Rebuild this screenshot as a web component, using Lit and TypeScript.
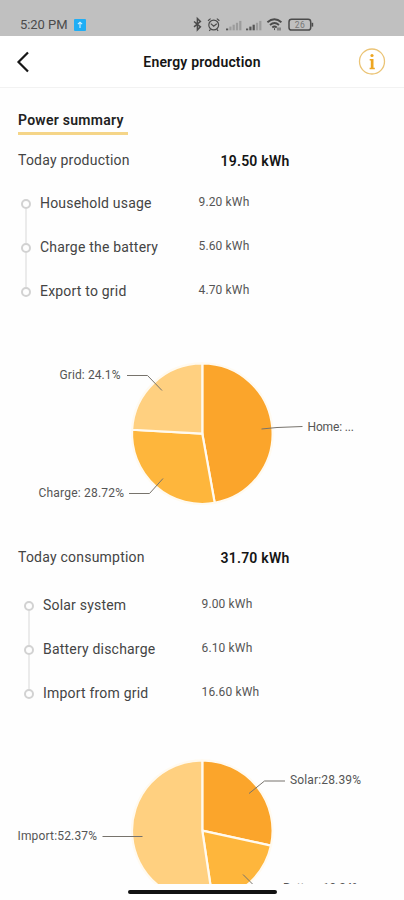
import { LitElement, html, svg, css } from "lit";
import { customElement, property } from "lit/decorators.js";

interface Row { label: string; value: string; }
interface Slice { share: number; color: string; }
interface Callout { text: string; x: number; y: number; width: number; line: string; }

const C = { deep: "#fba52b", mid: "#feb63c", light: "#ffd080" };

@customElement("status-bar")
class StatusBar extends LitElement {
  static styles = css`
    :host { display: flex; height: 36px; background: #c0c0c0; color: #4b4b4b; box-sizing: border-box; padding: 13px 0 0 20px; }
    .time { font-size: 13px; line-height: 24px; width: 54px; letter-spacing: -0.05px; white-space: nowrap; }
    .badge { width: 12px; height: 12px; margin-top: 6px; }
    .icons { margin-left: 105px; width: 124px; height: 20px; margin-top: 2px; }
    text { font-size: 8.5px; }
  `;
  render() {
    const bars = (x: number, on: number) => [0, 1, 2, 3, 4].map((i) => svg`
      <rect x=${x + i * 3.3} y=${13.5 - i * 1.9} width="2.200" height=${1.8 + i * 1.9} fill=${i < on ? "#555" : "#9c9c9c"}></rect>`);
    return html`
      <span class="time">5:20 PM</span>
      <svg class="badge" viewBox="0 0 12 12"><rect width="12" height="12" rx="1" fill="#20aef5"></rect>
        <path d="M6 9V3.4M3.9 5.2 6 3.2l2.1 2" fill="none" stroke="#d5f1ff" stroke-width="1.1"></path></svg>
      <svg class="icons" viewBox="191 15 124 20" fill="none" stroke="#4b4b4b" stroke-width="1.2">
        <path d="M194 21.5l6.400 5.400-3 3V18.500l3 3-6.400 5.400" stroke-width="1.500"></path>
        <circle cx="213.7" cy="25" r="4.9"></circle>
        <path d="M208 20.8l2.6-2.2M219.4 20.8l-2.6-2.2M210.8 23.6l2.9 2.6 3.1-2.4M210.5 29.4l-1.2 1.4M216.9 29.4l1.2 1.4"></path>
        <g stroke="none" transform="translate(0 15)">${bars(226, 1)}${bars(246, 3)}</g>
        <path d="M267.400 22.200q7-6 14 0M270 24.900q4.500-3.600 9 0M272.300 27.400q2.200-1.700 4.400 0" stroke-width="1.900"></path>
        <path d="M274.500 28.200v1.900M278 27.500v3M280 27.500v3" stroke-width="1"></path>
        <rect x="289" y="19.300" width="21.700" height="10.700" rx="2.600" stroke-width="1.500"></rect>
        <path d="M312.400 22.800v3.800" stroke-width="1.600"></path>
        <text x="294.800" y="27.800" textLength="10" fill="#777" stroke="none">26</text>
      </svg>`;
  }
}

@customElement("energy-list")
class EnergyList extends LitElement {
  @property({ attribute: false }) rows: Row[] = [];
  static styles = css`
    :host { display: block; }
    .row { display: grid; grid-template-columns: 19px 158.500px 1fr; height: 44px; position: relative; }
    .dot { box-sizing: border-box; width: 10px; height: 10px; border: 2px solid #d2d2d2; border-radius: 50%; margin-top: 6px; }
    .row:not(:last-child)::after { content: ""; position: absolute; left: 4px; top: 16px; width: 1.500px; height: 34px; background: #ebebeb; }
    .label { font-size: 14px; line-height: 20px; letter-spacing: 0.2px; color: #444; white-space: nowrap; }
    .value { font-size: 12px; line-height: 19px; letter-spacing: 0.15px; color: #555; white-space: nowrap; }
  `;
  render() {
    return this.rows.map((r) => html`
      <div class="row"><i class="dot"></i><span class="label">${r.label}</span><span class="value">${r.value}</span></div>`);
  }
}

@customElement("pie-chart")
class PieChart extends LitElement {
  @property({ attribute: false }) slices: Slice[] = [];
  @property({ attribute: false }) callouts: Callout[] = [];
  static styles = css`
    :host { display: block; overflow: hidden; }
    svg { display: block; }
    text { font-size: 12px; fill: #555; }
    .slice { stroke: #fffaf0; stroke-width: 2.200px; }
    .line { fill: none; stroke: #77736c; stroke-width: 1px; }
  `;
  render() {
    const cx = 202.300, cy = 73.700, r = 70.300;
    let a = 0;
    const pt = (t: number) => `${cx + r * Math.sin(t * 2 * Math.PI)} ${cy - r * Math.cos(t * 2 * Math.PI)}`;
    return html`<svg width="404" height="148" viewBox="0 0 404 148">
      ${this.slices.map((s) => {
        const from = a;
        a += s.share / 100;
        return svg`<path class="slice" fill=${s.color} d=${`M${cx} ${cy}L${pt(from)}A${r} ${r} 0 ${s.share > 50 ? 1 : 0} 1 ${pt(a)}Z`}></path>`;
      })}
      ${this.callouts.map((c) => svg`<path class="line" d=${c.line}></path>
        <text x=${c.x} y=${c.y} textLength=${c.width}>${c.text}</text>`)}
    </svg>`;
  }
}

@customElement("app-root")
class AppRoot extends LitElement {
  static styles = css`
    :host { display: flex; flex-direction: column; height: 900px; overflow: hidden; background: #fefefe; font-family: Roboto, "Liberation Sans", sans-serif; }
    header { box-sizing: border-box; flex: none; height: 52px; border-bottom: 1px solid #f2f2f2; display: grid; grid-template-columns: 46px 1fr 46px; align-items: center; background: #fff; }
    .back { margin-left: 16px; }
    h1 { margin: 0; font-size: 14px; font-weight: 600; text-align: center; letter-spacing: 0.18px; color: #151515; }
    main { flex: none; height: 796px; overflow: hidden; }
    .tab { display: block; width: 110px; margin: 22px 0 0 18px; height: 22px; border-bottom: 3px solid #f5d588; font-size: 14px; line-height: 20px; font-weight: 600; letter-spacing: 0.27px; color: #222; white-space: nowrap; }
    .total { display: grid; grid-template-columns: 202.500px 1fr; padding-left: 18px; height: 20px; font-size: 14px; line-height: 20px; color: #444; white-space: nowrap; letter-spacing: 0.22px; }
    .total b { font-weight: 600; color: #151515; padding-top: 1px; }
    .first { margin-top: 15px; }
    .second { margin-top: 39px; }
    .produced { margin: 23px 0 0 21px; }
    .consumed { margin: 28px 0 0 24px; }
    .pie1 { margin-top: 35px; height: 148px; }
    .pie2 { margin-top: 30px; height: 130px; }
    .home { flex: none; width: 149px; height: 4px; border-radius: 2px; background: #111; margin: 6px 0 0 128px; }
  `;
  render() {
    return html`
      <status-bar></status-bar>
      <header>
        <svg class="back" width="14" height="22" viewBox="0 0 14 22"><path d="M12 1.500 2.500 11 12 20.500" fill="none" stroke="#171717" stroke-width="2.200"></path></svg>
        <h1>Energy production</h1>
        <svg width="28" height="28" viewBox="0 0 28 28"><circle cx="14" cy="13.500" r="12.500" fill="none" stroke="#ebc476" stroke-width="1.300"></circle>
          <circle cx="14" cy="7.500" r="1.600" fill="#eda621"></circle><path d="M11.700 11h3.800v8.800h1.300v1.400h-5.200v-1.400h1.200v-7.400h-1.100z" fill="#eda621"></path></svg>
      </header>
      <main>
        <span class="tab">Power summary</span>
        <div class="total first"><span>Today production</span><b>19.50 kWh</b></div>
        <energy-list class="produced" .rows=${[
          { label: "Household usage", value: "9.20 kWh" },
          { label: "Charge the battery", value: "5.60 kWh" },
          { label: "Export to grid", value: "4.70 kWh" },
        ]}></energy-list>
        <pie-chart class="pie1"
          .slices=${[{ share: 47.18, color: C.deep }, { share: 28.72, color: C.mid }, { share: 24.1, color: C.light }]}
          .callouts=${[
            { text: "Grid: 24.1%", x: 59.500, y: 18.500, width: 61, line: "M127 15.500H147.500L162 30.500" },
            { text: "Home: ...", x: 307.500, y: 71, width: 46.500, line: "M261.500 69 277 67.500 302.500 66.500" },
            { text: "Charge: 28.72%", x: 38.500, y: 137, width: 85.500, line: "M129 133.500H149.500L163 118.500" },
          ]}></pie-chart>
        <div class="total second"><span>Today consumption</span><b>31.70 kWh</b></div>
        <energy-list class="consumed" .rows=${[
          { label: "Solar system", value: "9.00 kWh" },
          { label: "Battery discharge", value: "6.10 kWh" },
          { label: "Import from grid", value: "16.60 kWh" },
        ]}></energy-list>
        <pie-chart class="pie2"
          .slices=${[{ share: 28.39, color: C.deep }, { share: 19.24, color: C.mid }, { share: 52.37, color: C.light }]}
          .callouts=${[
            { text: "Solar:28.39%", x: 290, y: 27, width: 71, line: "M249 36.500 264.500 24H285" },
            { text: "Import:52.37%", x: 17.500, y: 82.500, width: 79.500, line: "M102.500 79.500H142.500" },
            { text: "Battery:19.24%", x: 283, y: 135, width: 78, line: "M243 117.500 258 132.500H278" },
          ]}></pie-chart>
      </main>
      <div class="home"></div>`;
  }
}
